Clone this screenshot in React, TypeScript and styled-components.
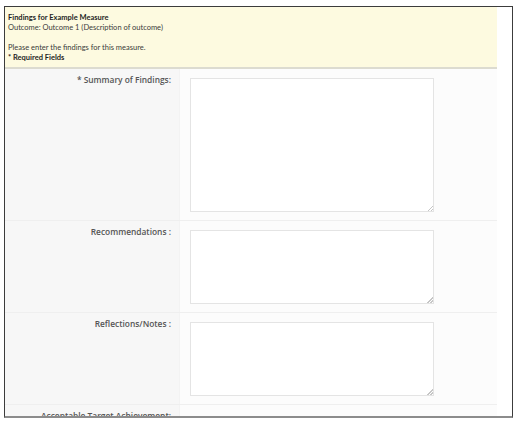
import React from "react";
import styled, { createGlobalStyle } from "styled-components";

const GlobalStyle = createGlobalStyle`
  html, body {
    margin: 0;
    padding: 0;
    background: #ffffff;
  }
  * {
    box-sizing: border-box;
  }
`;

const Frame = styled.div`
  margin: 6px 0 0 4px;
  width: 509px;
  height: 412px;
  border: 1px solid #3c3c3c;
  border-bottom: 2px solid #8c8c8c;
  padding-right: 15px;
  overflow: hidden;
  background: #ffffff;
`;

const Panel = styled.div`
  width: 492px;
`;

const Notice = styled.div`
  background: #fdfae0;
  border-bottom: 2px solid #dcdbd0;
  padding: 6px 3px 4px;
  font-family: Lato, "Liberation Sans", sans-serif;
  font-size: 7.5px;
  line-height: 10px;
  color: #2a2a2a;
`;

const NoticeLine = styled.div<{ $bold?: boolean }>`
  height: 10px;
  white-space: nowrap;
  font-weight: ${(p) => (p.$bold ? 700 : 400)};
  color: ${(p) => (p.$bold ? "#1e1e1e" : "#3a3a3a")};
`;

const Row = styled.div`
  display: grid;
  grid-template-columns: 174px 318px;
  border-bottom: 1px solid #efefef;
`;

const Label = styled.div`
  background: #f7f7f7;
  padding: 5px 8px 0 0;
  text-align: right;
  font-family: "Open Sans", "DejaVu Sans", sans-serif;
  font-weight: 600;
  font-size: 8.4px;
  line-height: 11px;
  color: #555555;
  white-space: nowrap;
`;

const Field = styled.div`
  background: #fcfcfc;
  padding: 9px 0 8px 10px;
  border-left: 1px solid #f3f3f3;
`;

const Area = styled.textarea<{ $h: number }>`
  display: block;
  width: 244px;
  height: ${(p) => p.$h}px;
  margin: 0;
  border: 1px solid #e4e4e4;
  border-radius: 0;
  background: #ffffff;
  resize: vertical;
  outline: none;

  &::-webkit-resizer {
    background: linear-gradient(
      135deg,
      transparent 0 80%,
      #c6c6c6 80% 84%,
      transparent 84% 90%,
      #c6c6c6 90% 94%,
      transparent 94%
    );
  }
`;

const fields = [
  { label: "* Summary of Findings:", h: 134 },
  { label: "Recommendations :", h: 74 },
  { label: "Reflections/Notes :", h: 74 },
];

export default function App() {
  return (
    <>
      <GlobalStyle />
      <Frame>
        <Panel>
          <Notice>
            <NoticeLine $bold>Findings for Example Measure</NoticeLine>
            <NoticeLine>Outcome: Outcome 1 (Description of outcome)</NoticeLine>
            <NoticeLine />
            <NoticeLine>Please enter the findings for this measure.</NoticeLine>
            <NoticeLine $bold>* Required Fields</NoticeLine>
          </Notice>
          {fields.map((f) => (
            <Row key={f.label}>
              <Label>{f.label}</Label>
              <Field>
                <Area $h={f.h} />
              </Field>
            </Row>
          ))}
          <Row>
            <Label>Acceptable Target Achievement:</Label>
            <Field />
          </Row>
        </Panel>
      </Frame>
    </>
  );
}
